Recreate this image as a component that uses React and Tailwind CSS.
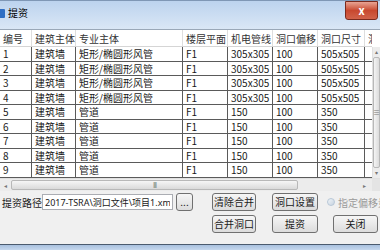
import { useState } from 'react'

const COLS = [
  { key: 'no', title: '编号', w: 'w-[32px]' },
  { key: 'body', title: '建筑主体', w: 'w-[44px]' },
  { key: 'pro', title: '专业主体', w: 'w-[107px]' },
  { key: 'floor', title: '楼层平面', w: 'w-[45px]' },
  { key: 'pipe', title: '机电管线', w: 'w-[45px]' },
  { key: 'off', title: '洞口偏移', w: 'w-[45px]' },
  { key: 'size', title: '洞口尺寸', w: 'w-[47px]' },
  { key: 'x', title: '洞口', w: 'w-[20px]' },
]

const duct = { body: '建筑墙', pro: '矩形/椭圆形风管', floor: 'F1', pipe: '305x305', off: '100', size: '505x505', x: '' }
const pipe = { body: '建筑墙', pro: '管道', floor: 'F1', pipe: '150', off: '100', size: '350', x: '' }

const ROWS = [1, 2, 3, 4, 5, 6, 7, 8, 9].map(n => ({ no: String(n), ...(n <= 4 ? duct : pipe) }))

function Btn({ children, className = '' }) {
  return (
    <button
      className={`shrink-0 h-[18px] rounded-[3px] border border-[#707070] bg-gradient-to-b from-[#f6f6f6] to-[#dcdcdc] text-[10px] leading-none text-[#1a1a1a] ${className}`}
    >
      {children}
    </button>
  )
}

export default function App() {
  const [path, setPath] = useState('2017-TSRA\\洞口文件\\项目1.xml')

  return (
    <div
      className="w-[380px] h-[250px] overflow-hidden bg-[#f0f0f0] flex flex-col text-[#1a1a1a]"
      style={{ fontFamily: '"Noto Sans CJK SC", "Liberation Sans", sans-serif' }}
    >
      {/* title bar */}
      <div className="h-[29px] shrink-0 flex items-start justify-between border-t border-[#7f97b5] bg-gradient-to-b from-[#bcd3ee] to-[#dae7f6]">
        <div className="flex items-center gap-[3px] pt-[6px]">
          <div className="w-[5px] h-[9px] bg-[#2f6fc4] rounded-r-[1px]" />
          <span className="text-[10px] leading-[12px] text-black">提资</span>
        </div>
        <div className="mr-[2px] w-[33px] h-[19px] rounded-b-[3px] border border-[#7a2a1e] bg-gradient-to-b from-[#e8a393] via-[#c8482f] to-[#d1624a] flex items-center justify-center text-white text-[11px] font-bold leading-none">
          x
        </div>
      </div>

      {/* grid */}
      <div className="h-[162px] shrink-0 flex flex-col bg-white border-t border-[#9aa8b8]">
        <div className="flex flex-1 min-h-0">
          <div className="flex-1 min-w-0 overflow-hidden">
            <div className="flex h-[17px] bg-white border-b border-[#d5d5d5] text-[10px] text-[#333]">
              {COLS.map(c => (
                <div key={c.key} className={`${c.w} shrink-0 px-[3px] flex items-center border-r border-[#dedede] whitespace-nowrap overflow-hidden`}>
                  {c.title}
                </div>
              ))}
            </div>
            {ROWS.map(r => (
              <div key={r.no} className="flex h-[14.5px] border-b border-[#5a5a5a] text-[10px]">
                {COLS.map(c => (
                  <div
                    key={c.key}
                    className={`${c.w} shrink-0 px-[3px] flex items-center whitespace-nowrap overflow-hidden border-r border-[#5a5a5a]`}
                  >
                    {r[c.key]}
                  </div>
                ))}
              </div>
            ))}
          </div>
          {/* vertical scrollbar */}
          <div className="w-[8px] shrink-0 mt-[17px] bg-[#ececec] border-l border-[#e0e0e0] flex flex-col items-center text-[#777]">
            <div className="h-[10px] text-[6px] leading-[10px]">▴</div>
            <div className="flex-1 w-full bg-gradient-to-r from-[#f4f4f4] to-[#dcdcdc] border border-[#b8b8b8] rounded-[2px] flex items-center justify-center text-[7px] leading-none">≡</div>
            <div className="h-[10px] text-[6px] leading-[10px]">▾</div>
          </div>
        </div>
        {/* horizontal scrollbar */}
        <div className="h-[13px] shrink-0 flex bg-[#ececec] border-t border-[#e0e0e0] text-[#777]">
          <div className="w-[11px] flex items-center justify-center text-[6px]">◂</div>
          <div className="w-[287px] my-[1px] bg-gradient-to-b from-[#f6f6f6] to-[#dadada] border border-[#b8b8b8] rounded-[2px] flex items-center justify-center text-[7px] leading-none tracking-[-1px]">
            III
          </div>
          <div className="flex-1 flex items-center justify-end pr-[6px] text-[6px]">▸</div>
          <div className="w-[8px] bg-[#e4e4e4]" />
        </div>
      </div>

      {/* bottom panel */}
      <div className="flex-1 flex flex-col gap-[4px] pt-[2px] text-[10px]">
        <div className="flex items-center h-[18px] overflow-hidden">
          <span className="shrink-0 ml-[2px] w-[40px] whitespace-nowrap">提资路径</span>
          <input
            value={path}
            onChange={e => setPath(e.target.value)}
            className="shrink-0 w-[131px] h-[16px] px-[2px] border border-[#abadb3] bg-white text-[9px] outline-none"
            style={{ fontFamily: '"Noto Sans", "Noto Sans CJK SC", sans-serif' }}
          />
          <Btn className="ml-[3px] w-[17px] text-[8px]">...</Btn>
          <Btn className="ml-[19px] w-[44px]">清除合并</Btn>
          <Btn className="ml-[16px] w-[46px]">洞口设置</Btn>
          <div className="shrink-0 ml-[9px] flex items-center gap-[3px] whitespace-nowrap text-[#9a9a9a]">
            <div className="w-[8px] h-[8px] rounded-full border border-[#b8c8d8] bg-gradient-to-br from-[#f0f4f8] to-[#c8d4e0]" />
            <span>指定偏移量</span>
          </div>
        </div>
        <div className="flex items-center h-[18px]">
          <Btn className="ml-[212px] w-[44px]">合并洞口</Btn>
          <Btn className="ml-[16px] w-[46px]">提资</Btn>
          <Btn className="ml-[15px] w-[45px]">关闭</Btn>
        </div>
      </div>

      {/* bottom frame */}
      <div className="h-[6px] shrink-0 border-t border-[#4b5b6e] bg-gradient-to-b from-[#a8c0de] to-[#c6d8ee]" />
    </div>
  )
}
